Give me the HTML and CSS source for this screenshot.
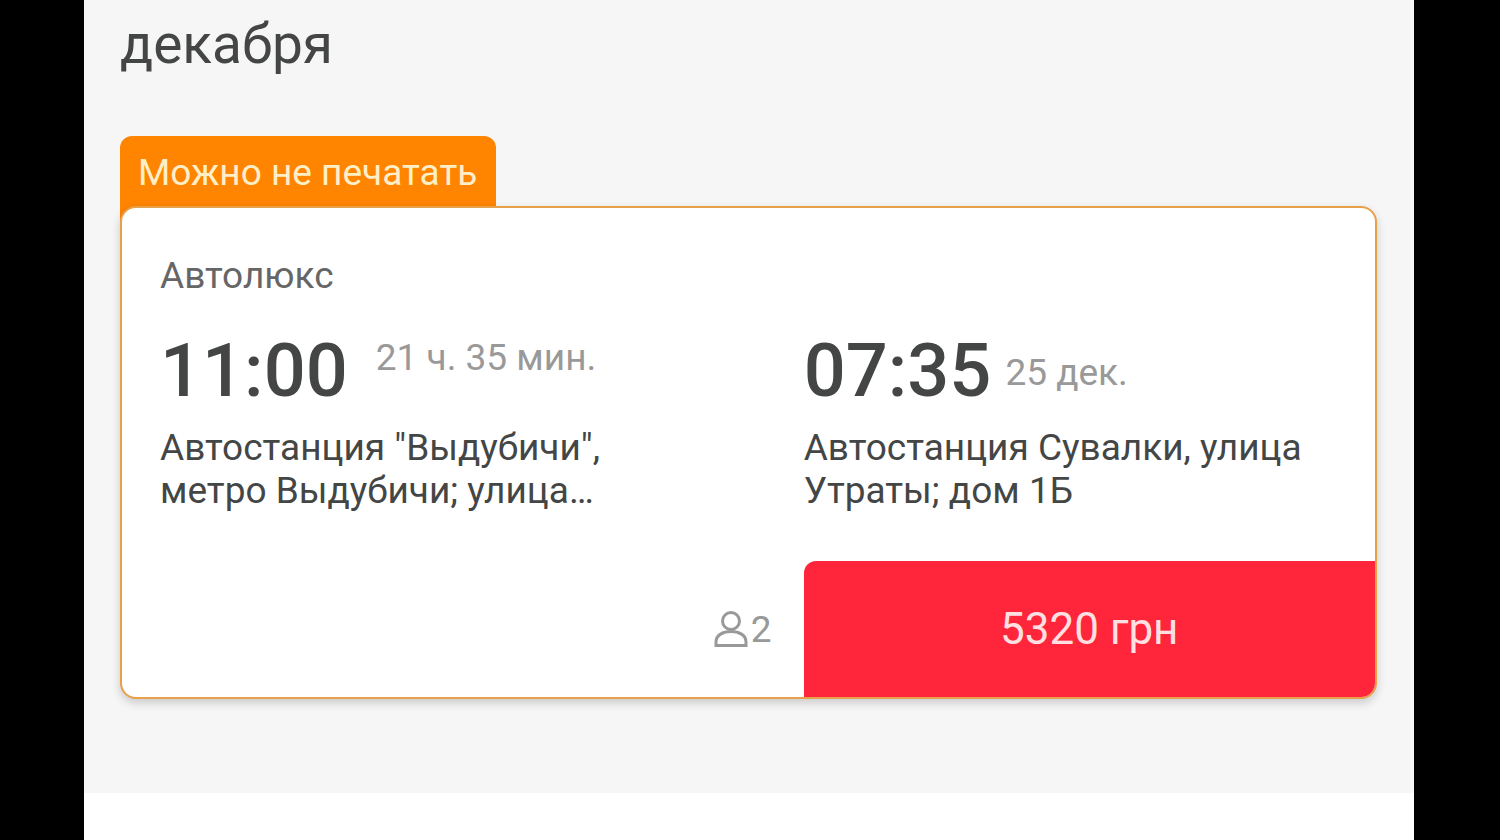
FILE: index.html
```html
<!DOCTYPE html>
<html lang="ru">
<head>
    <meta charset="utf-8">
    <title>Расписание автобусов</title>
    <link rel="stylesheet" href="styles.css">
</head>
<body>
    <div class="page">
        <main class="results">
            <h1 class="title">декабря</h1>

            <div class="badge">Можно не печатать</div>
            <article class="trip">
                <div class="carrier">Автолюкс</div>
                <div class="route">
                    <div class="point">
                        <div class="when">
                            <span class="time">11:00</span>
                            <span class="duration">21 ч. 35 мин.</span>
                        </div>
                        <div class="station">Автостанция "Выдубичи",<br>метро Выдубичи; улица…</div>
                    </div>
                    <div class="point">
                        <div class="when">
                            <span class="time">07:35</span>
                            <span class="date">25 дек.</span>
                        </div>
                        <div class="station">Автостанция Сувалки, улица Утраты; дом 1Б</div>
                    </div>
                </div>
                <div class="buy">
                    <div class="seats">
                        <svg class="person" viewBox="0 0 34 36" fill="none" stroke="#999" stroke-width="3">
                            <circle cx="17" cy="10" r="8.5"/>
                            <path d="M2 34.5V31C2 24 9 20.5 17 20.5S32 24 32 31V34.5Z"/>
                        </svg>
                        <span>2</span>
                    </div>
                    <button class="price" type="button">5320 грн</button>
                </div>
            </article>
        </main>
    </div>
</body>
</html>
```

FILE: styles.css
```css
* {
    box-sizing: border-box;
}

body {
    margin: 0;
    background: #000;
    color: #444645;
    font-family: Roboto, "Liberation Sans", sans-serif;
    font-size: 37px;
    line-height: 43px;
}

.page {
    min-height: 100vh;
    margin: 0 86px 0 84px;
    background: #fff;
}

.results {
    padding: 12px 37px 94px 36px;
    background: #f6f6f6;
}

.title {
    margin: 0 0 60px;
    font-size: 55px;
    font-weight: 400;
    line-height: 64px;
}

/* the tab runs under the card so its rounded corner stays orange */
.badge {
    width: fit-content;
    margin-bottom: -16px;
    padding: 15px 19px 28px 18px;
    background: #ff8400;
    border-radius: 12px 12px 0 0;
    color: #ffefc8;
}

.trip {
    position: relative;
    overflow: hidden;
    background: #fff;
    border: 2px solid #e9a04a;
    border-radius: 16px;
    box-shadow: 0 4px 10px rgba(0, 0, 0, 0.18);
}

.carrier {
    padding: 46px 38px 0;
    color: #666;
}

.route,
.buy {
    display: grid;
    grid-template-columns: 54.4% 1fr;
}

.route {
    margin-top: 32px;
}

.point:first-child {
    padding-left: 38px;
}

.when {
    display: flex;
    align-items: center;
    height: 84px;
    margin-bottom: 13px;
}

.time {
    font-size: 74px;
    font-weight: 500;
    line-height: 86px;
}

.duration,
.date,
.seats {
    color: #999;
}

.duration {
    align-self: flex-start;
    margin: 7px 0 0 28px;
}

.date {
    margin: 3px 0 0 14px;
}

.buy {
    margin-top: 49px;
}

.seats {
    display: flex;
    align-items: center;
    justify-content: flex-end;
    gap: 3px;
    padding-right: 32px;
}

.person {
    width: 34px;
    height: 36px;
}

.price {
    height: 136px;
    border: 0;
    border-radius: 12px 0 0 0;
    background: #ff263b;
    color: #ffe0e2;
    font: inherit;
    font-size: 44px;
    cursor: pointer;
}
```
